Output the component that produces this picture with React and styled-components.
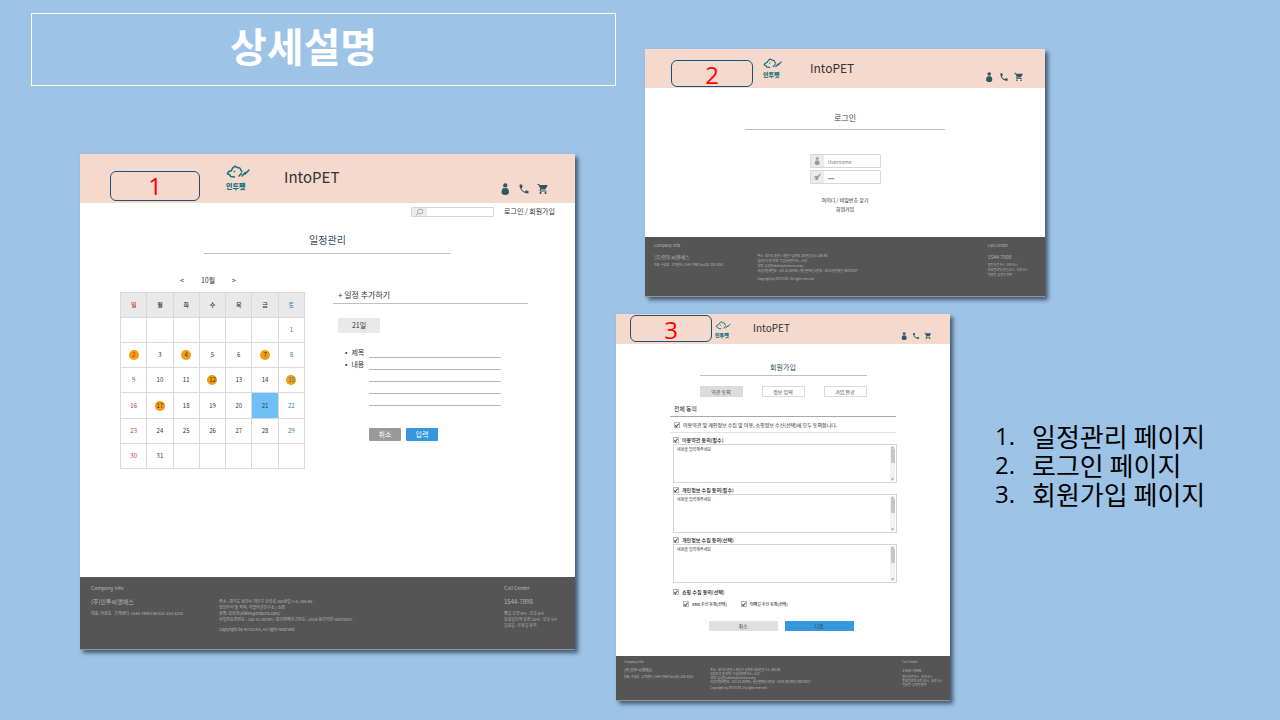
import React from 'react';
import styled, { createGlobalStyle, css } from 'styled-components';
import { MdPhone, MdShoppingCart } from 'react-icons/md';

const GlobalStyle = createGlobalStyle`
  *, *::before, *::after { box-sizing: border-box; }
  body {
    margin: 0;
    background: #9dc3e6;
    font-family: 'Noto Sans CJK KR', 'Noto Sans', sans-serif;
    color: #333;
  }
  h1, h2, h3, p, ul, ol { margin: 0; padding: 0; font-weight: 400; }
  ul, ol { list-style: none; }
  a { color: inherit; text-decoration: none; }
  button, input, textarea { font-family: inherit; margin: 0; padding: 0; border: 0; outline: 0; border-radius: 0; }
`;

/* One set of measures for each size of mock-up page */
const large = {
  header: 49, padLeft: 30, padRight: 26, badgeW: 90, badgeH: 30, badgeTop: 17,
  logoGap: 26, logoTop: 11, logoW: 26, dogW: 24, dogH: 14, logoText: 7, logoLine: 15,
  brandGap: 32, brandTop: 12, brand: 15, brandLine: 22, icon: 12, iconGap: 7, iconTop: 29,
  title: 10, titleLine: 14, titleTop: 16, titlePad: 6,
  foot: 73, footLeft: 11, footTop: 7, fHead: 5, fHeadLine: 8, fHeadGap: 6, fName: 6, fNameLine: 8,
  fText: 4, fTextLine: 6, fGap: 4,
};
const medium = {
  header: 39, padLeft: 26, padRight: 21, badgeW: 82, badgeH: 27, badgeTop: 11,
  logoGap: 10, logoTop: 9, logoW: 20, dogW: 19, dogH: 11, logoText: 6, logoLine: 12,
  brandGap: 27, brandTop: 9, brand: 12, brandLine: 20, icon: 10, iconGap: 5, iconTop: 23,
  title: 8, titleLine: 10, titleTop: 24, titlePad: 6,
  foot: 60, footLeft: 9, footTop: 5, fHead: 4, fHeadLine: 6, fHeadGap: 6, fName: 5, fNameLine: 6,
  fText: 3, fTextLine: 5, fGap: 3,
};
const small = {
  header: 30, padLeft: 14, padRight: 18, badgeW: 82, badgeH: 27, badgeTop: 1,
  logoGap: 3, logoTop: 7, logoW: 16, dogW: 16, dogH: 9, logoText: 5, logoLine: 10,
  brandGap: 22, brandTop: 4, brand: 10, brandLine: 20, icon: 8, iconGap: 4, iconTop: 18,
  title: 7, titleLine: 10, titleTop: 17, titlePad: 3,
  foot: 45, footLeft: 8, footTop: 4, fHead: 3, fHeadLine: 5, fHeadGap: 3, fName: 4, fNameLine: 5,
  fText: 3, fTextLine: 4, fGap: 2,
};

const Slide = styled.main`
  display: grid;
  grid-template-columns: 616fr 664fr;
  min-height: 100vh;
`;
const LeftColumn = styled.div`
  padding: 13px 0 0 31px;
`;
const RightColumn = styled.div`
  padding-top: 49px;
`;
const SlideTitle = styled.h1`
  height: 73px;
  border: 1px solid #fff;
  padding-right: 40px;
  color: #fff;
  font-size: 40px;
  line-height: 62px;
  font-weight: 700;
  text-align: center;
`;
const LowerRow = styled.div`
  display: grid;
  grid-template-columns: 334fr 285fr;
  column-gap: 45px;
  align-items: start;
  margin-top: 17px;
`;
const PageList = styled.ol`
  margin-top: 107px;
  color: #000;
  font-size: 26px;
  line-height: 29px;
  white-space: nowrap;
`;
const PageItem = styled.li`
  display: grid;
  grid-template-columns: 37px 1fr;
`;
const PageNumber = styled.span`
  font-family: 'Open Sans', sans-serif;
  font-size: 24px;
`;

const Panel = styled.section`
  background: #fff;
  margin: ${(p) => p.$margin || '0'};
  box-shadow: 3px 3px 4px rgba(20, 35, 60, 0.65);
`;

const Header = styled.header`
  display: flex;
  align-items: flex-start;
  height: ${(p) => p.$s.header}px;
  padding: 0 ${(p) => p.$s.padRight}px 0 ${(p) => p.$s.padLeft}px;
  background: #f4d9cc;
`;
const Badge = styled.span`
  flex: none;
  width: ${(p) => p.$s.badgeW}px;
  height: ${(p) => p.$s.badgeH}px;
  margin-top: ${(p) => p.$s.badgeTop}px;
  border: 1px solid #1f4e79;
  border-radius: 6px;
  color: #f00;
  font: 24px/28px 'Open Sans', sans-serif;
  text-align: center;
`;
const LogoLink = styled.a`
  flex: none;
  display: flex;
  flex-direction: column;
  width: ${(p) => p.$s.logoW}px;
  margin: ${(p) => p.$s.logoTop}px 0 0 ${(p) => p.$s.logoGap}px;
  color: #14707e;
  font-size: ${(p) => p.$s.logoText}px;
  line-height: ${(p) => p.$s.logoLine}px;
  font-weight: 900;
  white-space: nowrap;
`;
const Brand = styled.h2`
  margin: ${(p) => p.$s.brandTop}px 0 0 ${(p) => p.$s.brandGap}px;
  font-size: ${(p) => p.$s.brand}px;
  line-height: ${(p) => p.$s.brandLine}px;
  color: #333;
`;
const HeaderIcons = styled.nav`
  display: flex;
  gap: ${(p) => p.$s.iconGap}px;
  margin: ${(p) => p.$s.iconTop}px 0 0 auto;
  color: #2f5763;
  a, svg { display: block; }
`;

const PanelTitle = styled.h3`
  width: 50%;
  margin: ${(p) => p.$s.titleTop}px auto 0;
  padding-bottom: ${(p) => p.$s.titlePad}px;
  border-bottom: 1px solid #bfbfbf;
  color: #34495e;
  font-size: ${(p) => p.$s.title}px;
  line-height: ${(p) => p.$s.titleLine}px;
  text-align: center;
`;

const FooterBar = styled.footer`
  display: grid;
  grid-template-columns: 128fr 285fr 71fr;
  height: ${(p) => p.$s.foot}px;
  padding: ${(p) => p.$s.footTop}px 0 0 ${(p) => p.$s.footLeft}px;
  background: #555;
  border-bottom: 1px solid #9a938d;
  color: #b8b8b8;
  white-space: nowrap;
`;
const FootHead = styled.p`
  min-height: ${(p) => p.$s.fHeadLine}px;
  margin-bottom: ${(p) => p.$s.fHeadGap}px;
  font-size: ${(p) => p.$s.fHead}px;
  line-height: ${(p) => p.$s.fHeadLine}px;
`;
const FootName = styled.p`
  margin-bottom: ${(p) => p.$s.fGap}px;
  font-size: ${(p) => p.$s.fName}px;
  line-height: ${(p) => p.$s.fNameLine}px;
`;
const FootText = styled.p`
  font-size: ${(p) => p.$s.fText}px;
  line-height: ${(p) => p.$s.fTextLine}px;
`;
const Copyright = styled(FootText)`
  margin-top: ${(p) => p.$s.fGap}px;
`;

/* Schedule page */
const ScheduleBody = styled.div`
  min-height: 374px;
  padding-top: 4px;
`;
const UserBar = styled.div`
  display: flex;
  justify-content: flex-end;
  gap: 10px;
  height: 10px;
  padding-right: 20px;
  font-size: 7px;
  line-height: 9px;
`;
const IconField = styled.label`
  display: flex;
  width: ${(p) => p.$w}px;
  height: ${(p) => p.$h}px;
  border: 1px solid #d6d6d6;
  border-radius: 1px;
  background: #fff;
  input {
    flex: 1;
    min-width: 0;
    padding-left: 4px;
    background: none;
    color: #666;
    font-size: 5px;
  }
  input::placeholder { color: #777; opacity: 1; }
`;
const FieldIcon = styled.span`
  display: grid;
  place-items: center;
  width: ${(p) => p.$w}px;
  background: #ebebeb;
  color: #999;
  svg { display: block; }
`;
const ScheduleColumns = styled.div`
  display: grid;
  grid-template-columns: 185fr 195fr;
  column-gap: 28px;
  padding: 21px 47px 0 40px;
`;
const MonthNav = styled.div`
  display: flex;
  gap: 17px;
  padding-left: 60px;
  font-size: 7px;
  line-height: 10px;
  button { background: none; color: #333; font-size: 7px; line-height: 10px; }
`;
const Calendar = styled.table`
  width: 100%;
  margin-top: 7px;
  border-collapse: collapse;
  table-layout: fixed;
  font-size: 6px;
  line-height: 10px;
  text-align: center;
  tr { height: 25px; }
  tbody tr:nth-child(4n) { height: 26px; }
`;
const dayTone = css`
  color: ${(p) => (p.$col === 0 ? '#c0392b' : p.$col === 6 ? '#2980b9' : '#333')};
`;
const DayHead = styled.th`
  padding: 0;
  border: 1px solid #d9d9d9;
  background: #e9e9e9;
  font-weight: 500;
  ${dayTone}
`;
const Day = styled.td`
  padding: 0;
  border: 1px solid #d9d9d9;
  background: ${(p) => (p.$selected ? '#6fbff8' : '#fff')};
  ${dayTone}
`;
const Marked = styled.span`
  display: block;
  width: 10px;
  height: 10px;
  margin: 0 auto;
  border-radius: 50%;
  background: #f39c12;
`;
const AddSchedule = styled.form`
  padding-top: 14px;
  font-size: 7px;
`;
const AddTitle = styled.h3`
  padding: 0 0 2px 5px;
  border-bottom: 1px solid #bfbfbf;
  font-size: 8px;
  line-height: 12px;
`;
const DateChip = styled.p`
  width: 42px;
  margin: 14px 0 13px 5px;
  border-radius: 1px;
  background: #e9e9e9;
  line-height: 15px;
  text-align: center;
`;
const EntryRow = styled.div`
  display: grid;
  grid-template-columns: 31px 132fr 27fr;
  padding-left: 5px;
  line-height: 12px;
  label { padding-left: 7px; }
  label::before { content: '•'; margin-right: 4px; }
`;
const TitleInput = styled.input`
  width: 100%;
  height: 12px;
  border-bottom: 1px solid #b5b5b5;
  font-size: 7px;
`;
const NoteInput = styled.textarea`
  display: block;
  width: 100%;
  height: 48px;
  resize: none;
  overflow: hidden;
  background: repeating-linear-gradient(transparent 0 11px, #b5b5b5 11px 12px);
  font-size: 7px;
  line-height: 12px;
`;
const EntryButtons = styled.div`
  display: flex;
  gap: 5px;
  margin: 22px 0 0 36px;
`;
const EntryButton = styled.button`
  width: 32px;
  height: 13px;
  border-radius: 1px;
  background: ${(p) => (p.$primary ? '#3598dc' : '#999')};
  color: #fff;
  font-size: 7px;
  line-height: 13px;
`;

/* Log-in page */
const LoginBody = styled.div`
  min-height: 149px;
  padding-top: 1px;
`;
const LoginForm = styled.form`
  display: flex;
  flex-direction: column;
  align-items: center;
  gap: 2px;
  padding-top: 24px;
`;
const LoginLinks = styled.nav`
  display: flex;
  flex-direction: column;
  align-items: center;
  margin-top: 9px;
  color: #222;
  font-size: 5px;
  line-height: 9px;
`;

/* Sign-up page */
const SignupBody = styled.form`
  min-height: 312px;
  padding-top: 1px;
`;
const Steps = styled.nav`
  display: flex;
  justify-content: space-between;
  width: 50%;
  margin: 10px auto 0;
`;
const Step = styled.button`
  width: 43px;
  height: 11px;
  border: 1px solid #dadada;
  background: ${(p) => (p.$active ? '#dcdcdc' : '#fff')};
  color: #444;
  font-size: 5px;
  line-height: 9px;
`;
const Terms = styled.section`
  margin: 8px 54px 0;
  color: #222;
  font-size: 5px;
  line-height: 8px;
`;
const TermsTitle = styled.h3`
  padding: 0 0 3px 4px;
  border-bottom: 1px solid #a8a8a8;
`;
const AllTerms = styled.div`
  height: 16px;
  padding: 4px 0 0 4px;
  border-bottom: 1px solid #e2e2e2;
  margin-bottom: 2px;
`;
const CheckLabel = styled.label`
  display: flex;
  align-items: center;
  gap: 3px;
  height: 8px;
  font-size: ${(p) => p.$size || 5}px;
  font-weight: ${(p) => (p.$strong ? 500 : 400)};
  white-space: nowrap;
`;
const Tick = styled.input`
  appearance: none;
  display: flex;
  justify-content: center;
  flex: none;
  width: 6px;
  height: 6px;
  border: 1px solid #b4b4b4;
  &:checked::after {
    content: '';
    width: 2px;
    height: 4px;
    border: solid #444;
    border-width: 0 1px 1px 0;
    transform: rotate(40deg);
  }
`;
const TermGroup = styled.div`
  margin: 3px 0 0 3px;
`;
const TermBox = styled.div`
  display: flex;
  height: 39px;
  margin-right: -1px;
  padding: 1px;
  border: 1px solid #d4d4d4;
`;
const TermText = styled.textarea`
  flex: 1;
  resize: none;
  overflow: hidden;
  padding-left: 2px;
  color: #333;
  font-size: 4px;
  line-height: 7px;
`;
const ScrollTrack = styled.span`
  display: flex;
  flex-direction: column;
  align-items: center;
  justify-content: space-between;
  width: 5px;
  background: #f1f1f1;
  svg { display: block; }
`;
const ScrollThumb = styled.span`
  width: 4px;
  height: 14px;
  margin-bottom: 15px;
  background: #c6c6c6;
`;
const MarketingGroup = styled.div`
  margin: 5px 0 0 3px;
`;
const MarketingOptions = styled.div`
  display: flex;
  gap: 14px;
  margin: 4px 0 0 10px;
`;
const SignupButtons = styled.div`
  display: flex;
  justify-content: center;
  gap: 7px;
  margin-top: 13px;
  padding-right: 4px;
`;
const SignupButton = styled.button`
  width: 69px;
  height: 10px;
  background: ${(p) => (p.$primary ? '#3598dc' : '#dfdfdf')};
  color: #333;
  font-size: 5px;
  line-height: 10px;
`;

function PersonIcon({ size }) {
  return (
    <svg width={size} height={size} viewBox="0 0 24 24" fill="currentColor" aria-hidden="true">
      <circle cx="12.500" cy="4.800" r="4.300" />
      <path d="M9.500 9.600c.9.700 1.900 1 3 1s2.100-.3 3-1C18.300 11.600 20 15 20 18.500 20 22 17 24 12.500 24S5 22 5 18.500C5 15 6.700 11.600 9.500 9.600z" />
    </svg>
  );
}

function KeyIcon() {
  return (
    <svg width="8" height="8" viewBox="0 0 14 14" fill="currentColor" aria-hidden="true">
      <path d="M12.500 1 7.800 5.600A3.600 3.600 0 1 0 9.600 8.800L10 7l1-.3.200-1.500 1.300-.5L13.500 1zM4.200 11a1.200 1.200 0 1 1 0-2.400 1.200 1.200 0 0 1 0 2.400z" />
    </svg>
  );
}

function SearchIcon() {
  return (
    <svg width="9" height="8" viewBox="0 0 18 16" fill="none" stroke="currentColor" strokeWidth="1.600" aria-hidden="true">
      <ellipse cx="10.500" cy="7" rx="5.500" ry="4.600" />
      <path d="M6.500 10.500 2 14.500" />
    </svg>
  );
}

function DogMark({ s }) {
  return (
    <svg width={s.dogW} height={s.dogH} viewBox="0 0 24 14" fill="none" stroke="currentColor" strokeWidth="1.500" strokeLinecap="round" strokeLinejoin="round" aria-hidden="true">
      <path d="M8.500 12 4.800 11.600 3.800 9.800 1.300 8.800 2.400 6.800 5.200 5.800 6.800 2.800 9.200 1.200 11.200 2.600 13.800 3 15.800 6.600" />
      <path d="M8.300 6.400 8.600 6.400" />
      <path d="M13 11 15.400 8.400M16.200 11 19.200 7.400M19.200 9 23 5" />
    </svg>
  );
}

function Arrow({ down }) {
  return (
    <svg width="3" height="3" viewBox="0 0 6 6" fill="#999" aria-hidden="true">
      <path d={down ? 'M0 1h6L3 5z' : 'M0 5h6L3 1z'} />
    </svg>
  );
}

function PanelHeader({ s, number }) {
  return (
    <Header $s={s}>
      <Badge $s={s}>{number}</Badge>
      <LogoLink $s={s} href="#home">
        <DogMark s={s} />
        인투펫
      </LogoLink>
      <Brand $s={s}>IntoPET</Brand>
      <HeaderIcons $s={s}>
        <a href="#account" aria-label="내 정보"><PersonIcon size={s.icon} /></a>
        <a href="#call" aria-label="전화"><MdPhone size={s.icon} /></a>
        <a href="#cart" aria-label="장바구니"><MdShoppingCart size={s.icon} /></a>
      </HeaderIcons>
    </Header>
  );
}

function PanelFooter({ s }) {
  return (
    <FooterBar $s={s}>
      <div>
        <FootHead $s={s}>Company Info</FootHead>
        <FootName $s={s}>(주)인투씨앤에스</FootName>
        <FootText $s={s}>대표: 허성호 &nbsp; 고객센터: 1544-7898 Fax:031-333-4252</FootText>
      </div>
      <div>
        <FootHead $s={s} />
        <FootText $s={s}>주소 : 경기도 용인시 처인구 금학로 265번길 5-6, 386-90</FootText>
        <FootText $s={s}>담당부서 및 직책: 기업부설연구소 / 소장</FootText>
        <FootText $s={s}>성명: 김상현(shkim@intocns.com)</FootText>
        <FootText $s={s}>사업자등록번호 : 142-81-80795 / 통신판매신고번호 : 2019-용인처인-00070557</FootText>
        <Copyright $s={s}>Copyright by INTOCNS, All right reserved</Copyright>
      </div>
      <div>
        <FootHead $s={s}>Call Center</FootHead>
        <FootName $s={s}>1544-7898</FootName>
        <FootText $s={s}>평일 오전 9시 - 오후 6시</FootText>
        <FootText $s={s}>토요일당직 오전 10시 - 오후 5시</FootText>
        <FootText $s={s}>일요일·공휴일 휴무</FootText>
      </div>
    </FooterBar>
  );
}

const weekdays = ['일', '월', '화', '수', '목', '금', '토'];
const marked = [2, 4, 7, 12, 15, 17];
const selectedDay = 21;
const weeks = Array.from({ length: 6 }, (_, w) =>
  weekdays.map((_, d) => {
    const day = w * 7 + d - 5;
    return day >= 1 && day <= 31 ? day : null;
  })
);

function SchedulePage() {
  return (
    <Panel $margin="68px 41px 0 49px">
      <PanelHeader s={large} number="1" />
      <ScheduleBody>
        <UserBar>
          <IconField $w={83} $h={10}>
            <FieldIcon $w={15}><SearchIcon /></FieldIcon>
            <input type="search" aria-label="검색" />
          </IconField>
          <a href="#login">로그인 / 회원가입</a>
        </UserBar>
        <PanelTitle $s={large}>일정관리</PanelTitle>
        <ScheduleColumns>
          <div>
            <MonthNav>
              <button type="button">&lt;</button>
              <span>10월</span>
              <button type="button">&gt;</button>
            </MonthNav>
            <Calendar>
              <thead>
                <tr>{weekdays.map((d, i) => <DayHead key={d} $col={i}>{d}</DayHead>)}</tr>
              </thead>
              <tbody>
                {weeks.map((week, w) => (
                  <tr key={w}>
                    {week.map((day, i) => (
                      <Day key={i} $col={i} $selected={day === selectedDay}>
                        {marked.includes(day) ? <Marked>{day}</Marked> : day}
                      </Day>
                    ))}
                  </tr>
                ))}
              </tbody>
            </Calendar>
          </div>
          <AddSchedule>
            <AddTitle>+ 일정 추가하기</AddTitle>
            <DateChip>21일</DateChip>
            <EntryRow>
              <label htmlFor="entry-title">제목</label>
              <TitleInput id="entry-title" type="text" />
            </EntryRow>
            <EntryRow>
              <label htmlFor="entry-note">내용</label>
              <NoteInput id="entry-note" />
            </EntryRow>
            <EntryButtons>
              <EntryButton type="button">취소</EntryButton>
              <EntryButton type="button" $primary>입력</EntryButton>
            </EntryButtons>
          </AddSchedule>
        </ScheduleColumns>
      </ScheduleBody>
      <PanelFooter s={large} />
    </Panel>
  );
}

function LoginPage() {
  return (
    <Panel $margin="0 235px 0 29px">
      <PanelHeader s={medium} number="2" />
      <LoginBody>
        <PanelTitle $s={medium}>로그인</PanelTitle>
        <LoginForm>
          <IconField $w={71} $h={14}>
            <FieldIcon $w={13}><PersonIcon size={8} /></FieldIcon>
            <input type="text" placeholder="Username" aria-label="Username" />
          </IconField>
          <IconField $w={71} $h={14}>
            <FieldIcon $w={13}><KeyIcon /></FieldIcon>
            <input type="password" defaultValue="1234" aria-label="Password" />
          </IconField>
          <LoginLinks>
            <a href="#find">아이디 / 비밀번호 찾기</a>
            <a href="#join">회원가입</a>
          </LoginLinks>
        </LoginForm>
      </LoginBody>
      <PanelFooter s={medium} />
    </Panel>
  );
}

function Check({ children, size, strong }) {
  return (
    <CheckLabel $size={size} $strong={strong}>
      <Tick type="checkbox" defaultChecked />
      {children}
    </CheckLabel>
  );
}

const agreements = ['이용약관 동의(필수)', '개인정보 수집 동의(필수)', '개인정보 수집 동의(선택)'];

function SignupPage() {
  return (
    <Panel>
      <PanelHeader s={small} number="3" />
      <SignupBody>
        <PanelTitle $s={small}>회원가입</PanelTitle>
        <Steps>
          <Step type="button" $active>약관 동의</Step>
          <Step type="button">정보 입력</Step>
          <Step type="button">가입 완료</Step>
        </Steps>
        <Terms>
          <TermsTitle>전체 동의</TermsTitle>
          <AllTerms>
            <Check>이용약관 및 개인정보 수집 및 이용, 쇼핑정보 수신(선택)에 모두 동의합니다.</Check>
          </AllTerms>
          {agreements.map((name) => (
            <TermGroup key={name}>
              <Check strong>{name}</Check>
              <TermBox>
                <TermText aria-label={name} defaultValue="내용을 입력해주세요" />
                <ScrollTrack>
                  <Arrow />
                  <ScrollThumb />
                  <Arrow down />
                </ScrollTrack>
              </TermBox>
            </TermGroup>
          ))}
          <MarketingGroup>
            <Check strong>쇼핑 수집 동의(선택)</Check>
            <MarketingOptions>
              <Check size={4} strong>SMS 수신 동의(선택)</Check>
              <Check size={4} strong>이메일 수신 동의(선택)</Check>
            </MarketingOptions>
          </MarketingGroup>
        </Terms>
        <SignupButtons>
          <SignupButton type="button">취소</SignupButton>
          <SignupButton type="button" $primary>다음</SignupButton>
        </SignupButtons>
      </SignupBody>
      <PanelFooter s={small} />
    </Panel>
  );
}

export default function App() {
  return (
    <>
      <GlobalStyle />
      <Slide>
        <LeftColumn>
          <SlideTitle>상세설명</SlideTitle>
          <SchedulePage />
        </LeftColumn>
        <RightColumn>
          <LoginPage />
          <LowerRow>
            <SignupPage />
            <PageList>
              <PageItem><PageNumber>1.</PageNumber>일정관리 페이지</PageItem>
              <PageItem><PageNumber>2.</PageNumber>로그인 페이지</PageItem>
              <PageItem><PageNumber>3.</PageNumber>회원가입 페이지</PageItem>
            </PageList>
          </LowerRow>
        </RightColumn>
      </Slide>
    </>
  );
}
